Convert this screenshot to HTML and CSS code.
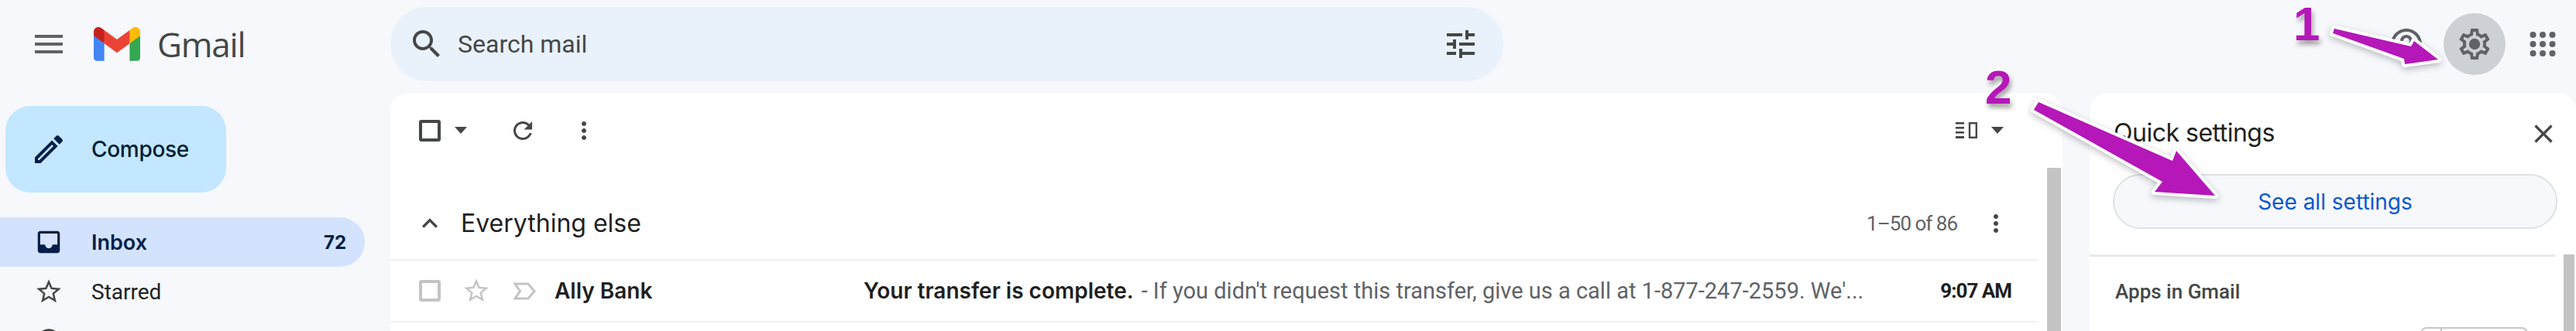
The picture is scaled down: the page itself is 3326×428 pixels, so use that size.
FILE: index.html
```html
<!DOCTYPE html>
<html lang="en">
<head>
<meta charset="utf-8">
<title>Gmail</title>
<link rel="stylesheet" href="styles.css">
</head>
<body>
<div class="app">
  <header class="topbar">
    <div class="brand">
      <svg class="icon48 dark menu" viewBox="0 0 24 24"><path d="M3 18h18v-2H3v2zm0-5h18v-2H3v2zm0-7v2h18V6H3z"/></svg>
      <svg class="gmail-logo" viewBox="0 0 256 193" preserveAspectRatio="none">
        <path fill="#4285F4" d="M58.182 192.05V93.14L27.507 65.077 0 49.504v125.091c0 9.658 7.825 17.455 17.455 17.455h40.727Z"/>
        <path fill="#34A853" d="M197.818 192.05h40.727c9.659 0 17.455-7.826 17.455-17.455V49.505l-31.156 17.837-27.026 25.798v98.91Z"/>
        <path fill="#EA4335" d="m58.182 93.14-4.174-38.647 4.174-36.989L128 69.868l69.818-52.364 4.669 34.992-4.669 40.644L128 145.504z"/>
        <path fill="#FBBC04" d="M197.818 17.504V93.14L256 49.504V26.231c0-21.585-24.64-33.89-41.89-20.945l-16.292 12.218Z"/>
        <path fill="#C5221F" d="M0 49.504l26.759 20.07L58.182 93.14V17.504L41.89 5.286C24.61-7.66 0 4.646 0 26.23v23.273Z"/>
      </svg>
      <span class="gmail-word">Gmail</span>
    </div>
    <div class="search">
      <svg class="icon48 dark" viewBox="0 0 24 24"><path d="M15.5 14h-.79l-.28-.27C15.41 12.59 16 11.11 16 9.5 16 5.91 13.09 3 9.5 3S3 5.91 3 9.5 5.91 16 9.5 16c1.61 0 3.09-.59 4.23-1.57l.27.28v.79l5 4.99L20.49 19l-4.99-5zm-6 0C7.01 14 5 11.99 5 9.5S7.01 5 9.5 5 14 7.01 14 9.5 11.99 14 9.5 14z"/></svg>
      <span class="search-text">Search mail</span>
      <svg class="icon48 dark tune" viewBox="0 0 24 24"><path d="M3 17v2h6v-2H3zM3 5v2h10V5H3zm10 16v-2h8v-2h-8v-2h-2v6h2zM7 9v2H3v2h4v2h2V9H7zm14 4v-2H11v2h10zm-6-4h2V7h4V5h-4V3h-2v6z"/></svg>
    </div>
    <div class="top-actions">
      <svg class="icon48 grey" viewBox="0 0 24 24"><path d="M11 18h2v-2h-2v2zm1-16C6.48 2 2 6.48 2 12s4.48 10 10 10 10-4.48 10-10S17.52 2 12 2zm0 18c-4.41 0-8-3.59-8-8s3.59-8 8-8 8 3.59 8 8-3.59 8-8 8zm0-14c-2.21 0-4 1.79-4 4h2c0-1.1.9-2 2-2s2 .9 2 2c0 2-3 1.75-3 5h2c0-2.25 3-2.5 3-5 0-2.21-1.79-4-4-4z"/></svg>
      <div class="gear-wrap">
        <svg class="icon48 grey" viewBox="0 0 24 24"><path d="M19.43 12.98c.04-.32.07-.64.07-.98 0-.34-.03-.66-.07-.98l2.11-1.65c.19-.15.24-.42.12-.64l-2-3.46c-.09-.16-.26-.25-.44-.25-.06 0-.12.01-.17.03l-2.49 1c-.52-.4-1.08-.73-1.69-.98l-.38-2.65C14.46 2.18 14.25 2 14 2h-4c-.25 0-.46.18-.49.42l-.38 2.65c-.61.25-1.17.59-1.69.98l-2.49-1c-.06-.02-.12-.03-.18-.03-.17 0-.34.09-.43.25l-2 3.46c-.13.22-.07.49.12.64l2.11 1.65c-.04.32-.07.65-.07.98 0 .33.03.66.07.98l-2.11 1.65c-.19.15-.24.42-.12.64l2 3.46c.09.16.26.25.44.25.06 0 .12-.01.17-.03l2.49-1c.52.4 1.08.73 1.69.98l.38 2.65c.03.24.24.42.49.42h4c.25 0 .46-.18.49-.42l.38-2.65c.61-.25 1.17-.59 1.69-.98l2.49 1c.06.02.12.03.18.03.17 0 .34-.09.43-.25l2-3.46c.12-.22.07-.49-.12-.64l-2.11-1.65zm-1.98-1.71c.04.31.05.52.05.73 0 .21-.02.43-.05.73l-.14 1.13.89.7 1.08.84-.7 1.21-1.27-.51-1.04-.42-.9.68c-.43.32-.84.56-1.25.73l-1.06.43-.16 1.13-.2 1.35h-1.4l-.19-1.35-.16-1.13-1.06-.43c-.43-.18-.83-.41-1.23-.71l-.91-.7-1.06.43-1.27.51-.7-1.21 1.08-.84.89-.7-.14-1.13c-.03-.31-.05-.54-.05-.74s.02-.43.05-.73l.14-1.13-.89-.7-1.08-.84.7-1.21 1.27.51 1.04.42.9-.68c.43-.32.84-.56 1.25-.73l1.06-.43.16-1.13.2-1.35h1.39l.19 1.35.16 1.13 1.06.43c.43.18.83.41 1.23.71l.91.7 1.06-.43 1.27-.51.7 1.21-1.07.85-.89.7.14 1.13z"/><circle cx="12" cy="12" r="3.6"/></svg>
      </div>
      <svg class="apps" viewBox="0 0 34 32"><g fill="#5f6368"><circle cx="4.5" cy="4" r="4"/><circle cx="17" cy="4" r="4"/><circle cx="29.5" cy="4" r="4"/><circle cx="4.5" cy="16" r="4"/><circle cx="17" cy="16" r="4"/><circle cx="29.5" cy="16" r="4"/><circle cx="4.5" cy="28" r="4"/><circle cx="17" cy="28" r="4"/><circle cx="29.5" cy="28" r="4"/></g></svg>
    </div>
  </header>

  <div class="body-row">
    <nav class="sidebar">
      <button class="compose">
        <svg class="icon48 pencil" viewBox="0 0 24 24"><path d="M3 17.25V21h3.75L17.81 9.94l-3.75-3.75L3 17.25zM5.92 19H5v-.92l9.06-9.06.92.92L5.92 19zM20.71 5.63l-2.34-2.34c-.39-.39-1.02-.39-1.41 0l-1.83 1.83 3.75 3.75 1.83-1.83c.39-.39.39-1.02 0-1.41z"/></svg>
        <span>Compose</span>
      </button>
      <ul class="nav-list">
        <li class="nav-item active">
          <svg class="nav-icon" viewBox="0 0 24 24"><path fill-rule="evenodd" d="M19 3H5c-1.1 0-2 .9-2 2v14c0 1.1.9 2 2 2h14c1.1 0 2-.9 2-2V5c0-1.1-.9-2-2-2zm0 2v9h-4c0 1.66-1.34 3-3 3s-3-1.34-3-3H5V5h14z"/></svg>
          <span class="nav-label">Inbox</span><span class="nav-count">72</span>
        </li>
        <li class="nav-item">
          <svg class="nav-icon" viewBox="0 0 24 24"><path d="M22 9.24l-7.19-.62L12 2 9.19 8.63 2 9.24l5.46 4.73L5.82 21 12 17.27 18.18 21l-1.63-7.03L22 9.24zM12 15.4l-3.76 2.27 1-4.28-3.32-2.88 4.38-.38L12 6.1l1.71 4.04 4.38.38-3.32 2.88 1 4.28L12 15.4z"/></svg>
          <span class="nav-label">Starred</span>
        </li>
        <li class="nav-item">
          <svg class="nav-icon" viewBox="0 0 24 24"><path d="M11.99 2C6.47 2 2 6.48 2 12s4.47 10 9.99 10C17.52 22 22 17.52 22 12S17.52 2 11.99 2zM12 20c-4.42 0-8-3.58-8-8s3.58-8 8-8 8 3.58 8 8-3.58 8-8 8zm.5-13H11v6l5.25 3.15.75-1.23-4.5-2.67z"/></svg>
        </li>
      </ul>
    </nav>

    <main class="mail-card">
      <div class="toolbar">
        <div class="toolbar-left">
          <span class="checkbox"></span>
          <span class="caret"></span>
          <svg class="icon36 refresh" viewBox="0 0 24 24"><path d="M17.65 6.35C16.2 4.9 14.21 4 12 4c-4.42 0-7.99 3.58-7.99 8s3.57 8 7.99 8c3.73 0 6.84-2.55 7.73-6h-2.08c-.82 2.33-3.04 4-5.65 4-3.31 0-6-2.69-6-6s2.69-6 6-6c1.66 0 3.14.69 4.22 1.78L13 11h7V4l-2.35 2.35z"/></svg>
          <svg class="icon36 more" viewBox="0 0 24 24"><path d="M12 8c1.1 0 2-.9 2-2s-.9-2-2-2-2 .9-2 2 .9 2 2 2zm0 2c-1.1 0-2 .9-2 2s.9 2 2 2 2-.9 2-2-.9-2-2-2zm0 6c-1.1 0-2 .9-2 2s.9 2 2 2 2-.9 2-2-.9-2-2-2z"/></svg>
        </div>
        <div class="toolbar-right">
          <svg class="view-icon" viewBox="0 0 28 21"><g fill="#444746"><rect width="11" height="2.6"/><rect y="6" width="11" height="2.6"/><rect y="12" width="11" height="2.6"/><rect y="18" width="11" height="3"/></g><rect x="18" y="1.2" width="8.8" height="18.6" fill="none" stroke="#444746" stroke-width="2.4"/></svg>
          <span class="caret"></span>
        </div>
      </div>
      <div class="mail-body">
        <div class="mail-list">
          <div class="section-head">
            <svg class="chevron" viewBox="0 0 24 24"><path d="M12 8l-6 6 1.41 1.41L12 10.83l4.59 4.58L18 14z"/></svg>
            <span class="section-title">Everything else</span>
            <span class="section-range">1–50 of 86</span>
            <svg class="icon36" viewBox="0 0 24 24"><path d="M12 8c1.1 0 2-.9 2-2s-.9-2-2-2-2 .9-2 2 .9 2 2 2zm0 2c-1.1 0-2 .9-2 2s.9 2 2 2 2-.9 2-2-.9-2-2-2zm0 6c-1.1 0-2 .9-2 2s.9 2 2 2 2-.9 2-2-.9-2-2-2z"/></svg>
          </div>
          <div class="mail-row">
            <span class="checkbox light"></span>
            <svg class="row-star" viewBox="0 0 24 24"><path d="M22 9.24l-7.19-.62L12 2 9.19 8.63 2 9.24l5.46 4.73L5.82 21 12 17.27 18.18 21l-1.63-7.03L22 9.24zM12 15.4l-3.76 2.27 1-4.28-3.32-2.88 4.38-.38L12 6.1l1.71 4.04 4.38.38-3.32 2.88 1 4.28L12 15.4z"/></svg>
            <svg class="row-important" viewBox="0 0 29 23"><path d="M2 2h17l8 9.5-8 9.5H2l6.5-9.5z" fill="none" stroke="#c4c4c4" stroke-width="3"/></svg>
            <span class="sender">Ally Bank</span>
            <span class="subject">Your transfer is complete.</span>
            <span class="snippet">- If you didn't request this transfer, give us a call at 1-877-247-2559. We'...</span>
            <span class="time">9:07 AM</span>
          </div>
        </div>
        <div class="scrollbar"></div>
      </div>
    </main>

    <aside class="settings">
      <div class="settings-head">
        <span class="settings-title">Quick settings</span>
        <svg class="close" viewBox="0 0 24 24"><path d="M19 6.41L17.59 5 12 10.59 6.41 5 5 6.41 10.59 12 5 17.59 6.41 19 12 13.41 17.59 19 19 17.59 13.41 12z"/></svg>
      </div>
      <button class="see-all">See all settings</button>
      <div class="settings-body">
        <div class="settings-content">
          <div class="apps-title">Apps in Gmail</div>
          <div class="customize"><span class="customize-a"></span><span class="customize-b"></span></div>
        </div>
        <div class="settings-scroll"></div>
      </div>
    </aside>
  </div>
</div>

<svg class="arrows" viewBox="0 0 3326 428">
  <polygon class="arrow" points="3014,37 3113,60 3117,53 3148,77 3105,83 3104,76 3012,43"/>
  <polygon class="arrow" points="2632,132 2805,208 2810,195 2860,253 2782,248 2792,235 2626,142"/>
</svg>
<span class="step step-one">1</span>
<span class="step step-two">2</span>
</body>
</html>
```
FILE: styles.css
```css
* { box-sizing: border-box; }
html, body { margin: 0; padding: 0; }
body {
  width: 3326px;
  height: 428px;
  overflow: hidden;
  position: relative;
  background: #f6f8fc;
  font-family: Roboto, "Liberation Sans", sans-serif;
  color: #1f1f1f;
}
svg { display: block; flex: none; }
.app { width: 3326px; height: 428px; overflow: hidden; display: flex; flex-direction: column; }

.icon48 { width: 48px; height: 48px; }
.icon36 { width: 36px; height: 36px; fill: #444746; }
.dark { fill: #444746; }
.grey { fill: #5f6368; }

.topbar { height: 120px; display: flex; flex: none; padding-top: 9px; }
.brand { width: 504px; height: 96px; display: flex; align-items: center; padding-left: 39px; }
.menu { fill: #5f6368; }
.gmail-logo { width: 60px; height: 44px; margin-left: 34px; }
.gmail-word {
  margin-left: 22px;
  font-family: "Open Sans", sans-serif;
  font-size: 44px;
  color: #444746;
  letter-spacing: -1.2px;
}
.search {
  width: 1437px;
  height: 96px;
  border-radius: 48px;
  background: #e9f1fb;
  display: flex;
  align-items: center;
  padding-left: 23px;
  padding-right: 31px;
}
.search-text { margin-left: 16px; font-size: 32px; color: #444746; flex: 1; }
.top-actions { margin-left: auto; display: flex; align-items: center; height: 96px; padding-right: 26px; }
.top-actions > .grey { margin-right: 24px; }
.gear-wrap {
  width: 80px;
  height: 80px;
  border-radius: 50%;
  background: #cdd0d4;
  display: flex;
  align-items: center;
  justify-content: center;
  margin-right: 31px;
}
.apps { width: 34px; height: 32px; }

.body-row { flex: 1; display: flex; min-height: 0; }
.sidebar { width: 504px; flex: none; padding-top: 17px; overflow: hidden; }
.compose {
  margin-left: 7px;
  width: 285px;
  height: 112px;
  border: 0;
  border-radius: 32px;
  background: #c2e7ff;
  display: flex;
  align-items: center;
  padding: 0 0 0 32px;
  font-family: Inter, sans-serif;
  font-size: 28px;
  font-weight: 500;
  letter-spacing: -0.3px;
  color: #001d35;
}
.compose span { margin-left: 31px; }
.pencil { fill: #041e49; }
.nav-list { list-style: none; margin: 32px 0 0; padding: 0; width: 471px; }
.nav-item { height: 64px; display: flex; align-items: center; padding-left: 44px; font-size: 28px; color: #202124; }
.nav-item.active { background: #d3e3fd; border-radius: 0 32px 32px 0; font-family: Inter, sans-serif; font-size: 27px; font-weight: 600; color: #041e49; }
.nav-icon { width: 38px; height: 38px; fill: #444746; }
.active .nav-icon { fill: #041e49; }
.nav-label { margin-left: 36px; flex: 1; }
.nav-count { font-size: 24px; font-weight: 700; margin-right: 24px; }

.mail-card {
  width: 2159px;
  flex: none;
  background: #fff;
  border-radius: 24px 24px 0 0;
  display: flex;
  flex-direction: column;
  overflow: hidden;
}
.toolbar { height: 97px; flex: none; display: flex; align-items: center; justify-content: space-between; padding: 0 76px 0 37px; }
.toolbar-left, .toolbar-right { display: flex; align-items: center; }
.checkbox { width: 28px; height: 28px; border: 4px solid #444746; border-radius: 3px; flex: none; }
.checkbox.light { border-color: #c4c4c4; }
.caret { width: 0; height: 0; border-left: 8px solid transparent; border-right: 8px solid transparent; border-top: 9px solid #444746; margin-left: 18px; }
.refresh { margin-left: 54px; }
.more { margin-left: 43px; }
.view-icon { width: 28px; height: 21px; }
.mail-body { flex: 1; display: flex; min-height: 0; padding-right: 2px; }
.mail-list { width: 2128px; flex: none; }
.section-head { height: 120px; display: flex; align-items: center; border-bottom: 2px solid #eff0f2; padding: 25px 37px 0 31px; }
.chevron { width: 40px; height: 40px; fill: #444746; }
.section-title { font-size: 32px; font-family: Inter, sans-serif; margin-left: 20px; flex: 1; }
.section-range { font-size: 26px; letter-spacing: -1px; color: #5f6368; margin-right: 32px; }
.mail-row { height: 80px; display: flex; align-items: center; border-bottom: 2px solid #eff0f2; padding-left: 37px; font-size: 30px; }
.row-star { width: 38px; height: 38px; margin-left: 27px; fill: #c4c4c4; }
.row-important { width: 29px; height: 23px; margin-left: 29px; }
.sender { width: 399px; margin-left: 24px; font-family: Inter, sans-serif; font-size: 28px; font-weight: 600; }
.subject { font-family: Inter, sans-serif; font-size: 28px; font-weight: 600; }
.snippet { margin-left: 10px; font-size: 29px; color: #5f6368; white-space: nowrap; }
.time { margin-left: auto; margin-right: 35px; font-size: 26px; letter-spacing: -1px; font-weight: 700; }
.scrollbar { width: 18px; margin-left: 11px; background: #c4c4c4; }

.settings {
  width: 628px;
  margin-left: 35px;
  flex: none;
  background: #fff;
  border-radius: 24px 24px 0 0;
  display: flex;
  flex-direction: column;
  overflow: hidden;
}
.settings-head { height: 76px; flex: none; display: flex; align-items: flex-end; justify-content: space-between; padding: 0 22px 0 31px; }
.settings-title { font-family: Inter, sans-serif; font-size: 32px; line-height: 48px; letter-spacing: -0.5px; }
.close { width: 40px; height: 40px; fill: #444746; margin-bottom: 3px; }
.see-all {
  flex: none;
  margin: 29px 24px 0 30px;
  height: 71px;
  border: 2px solid #dfe1e5;
  border-radius: 36px;
  background: #f6f8fc;
  color: #0b57d0;
  font-family: Inter, sans-serif;
  font-size: 28px;
  font-weight: 400;
}
.settings-body { flex: 1; display: flex; margin-top: 33px; min-height: 0; }
.settings-content { width: 601px; border-top: 3px solid #e8e9eb; padding: 30px 0 0 33px; flex: none; }
.apps-title { font-size: 26px; font-weight: 500; color: #444746; }
.customize { display: flex; margin: 31px 35px 0 auto; width: 139px; height: 40px; border: 2px solid #c7c7c7; border-radius: 8px; }
.customize-a { width: 26px; border-right: 2px solid #c7c7c7; }
.settings-scroll { width: 14px; margin-left: 11px; background: #c4c4c4; }

.arrows { position: absolute; left: 0; top: 0; width: 3326px; height: 428px; pointer-events: none; filter: drop-shadow(0 3px 4px rgba(0,0,0,.25)); }
.arrow { fill: #b517b8; stroke: #fff; stroke-width: 8px; stroke-linejoin: round; paint-order: stroke; }
.step {
  position: absolute;
  font-family: "Liberation Sans", sans-serif;
  font-weight: 700;
  font-size: 62px;
  line-height: 62px;
  color: #b517b8;
  -webkit-text-stroke: 5px #fff;
  paint-order: stroke fill;
  text-shadow: 2px 5px 6px rgba(0,0,0,.4);
}
.step-one { left: 2961px; top: 0; }
.step-two { left: 2563px; top: 82px; }
```
